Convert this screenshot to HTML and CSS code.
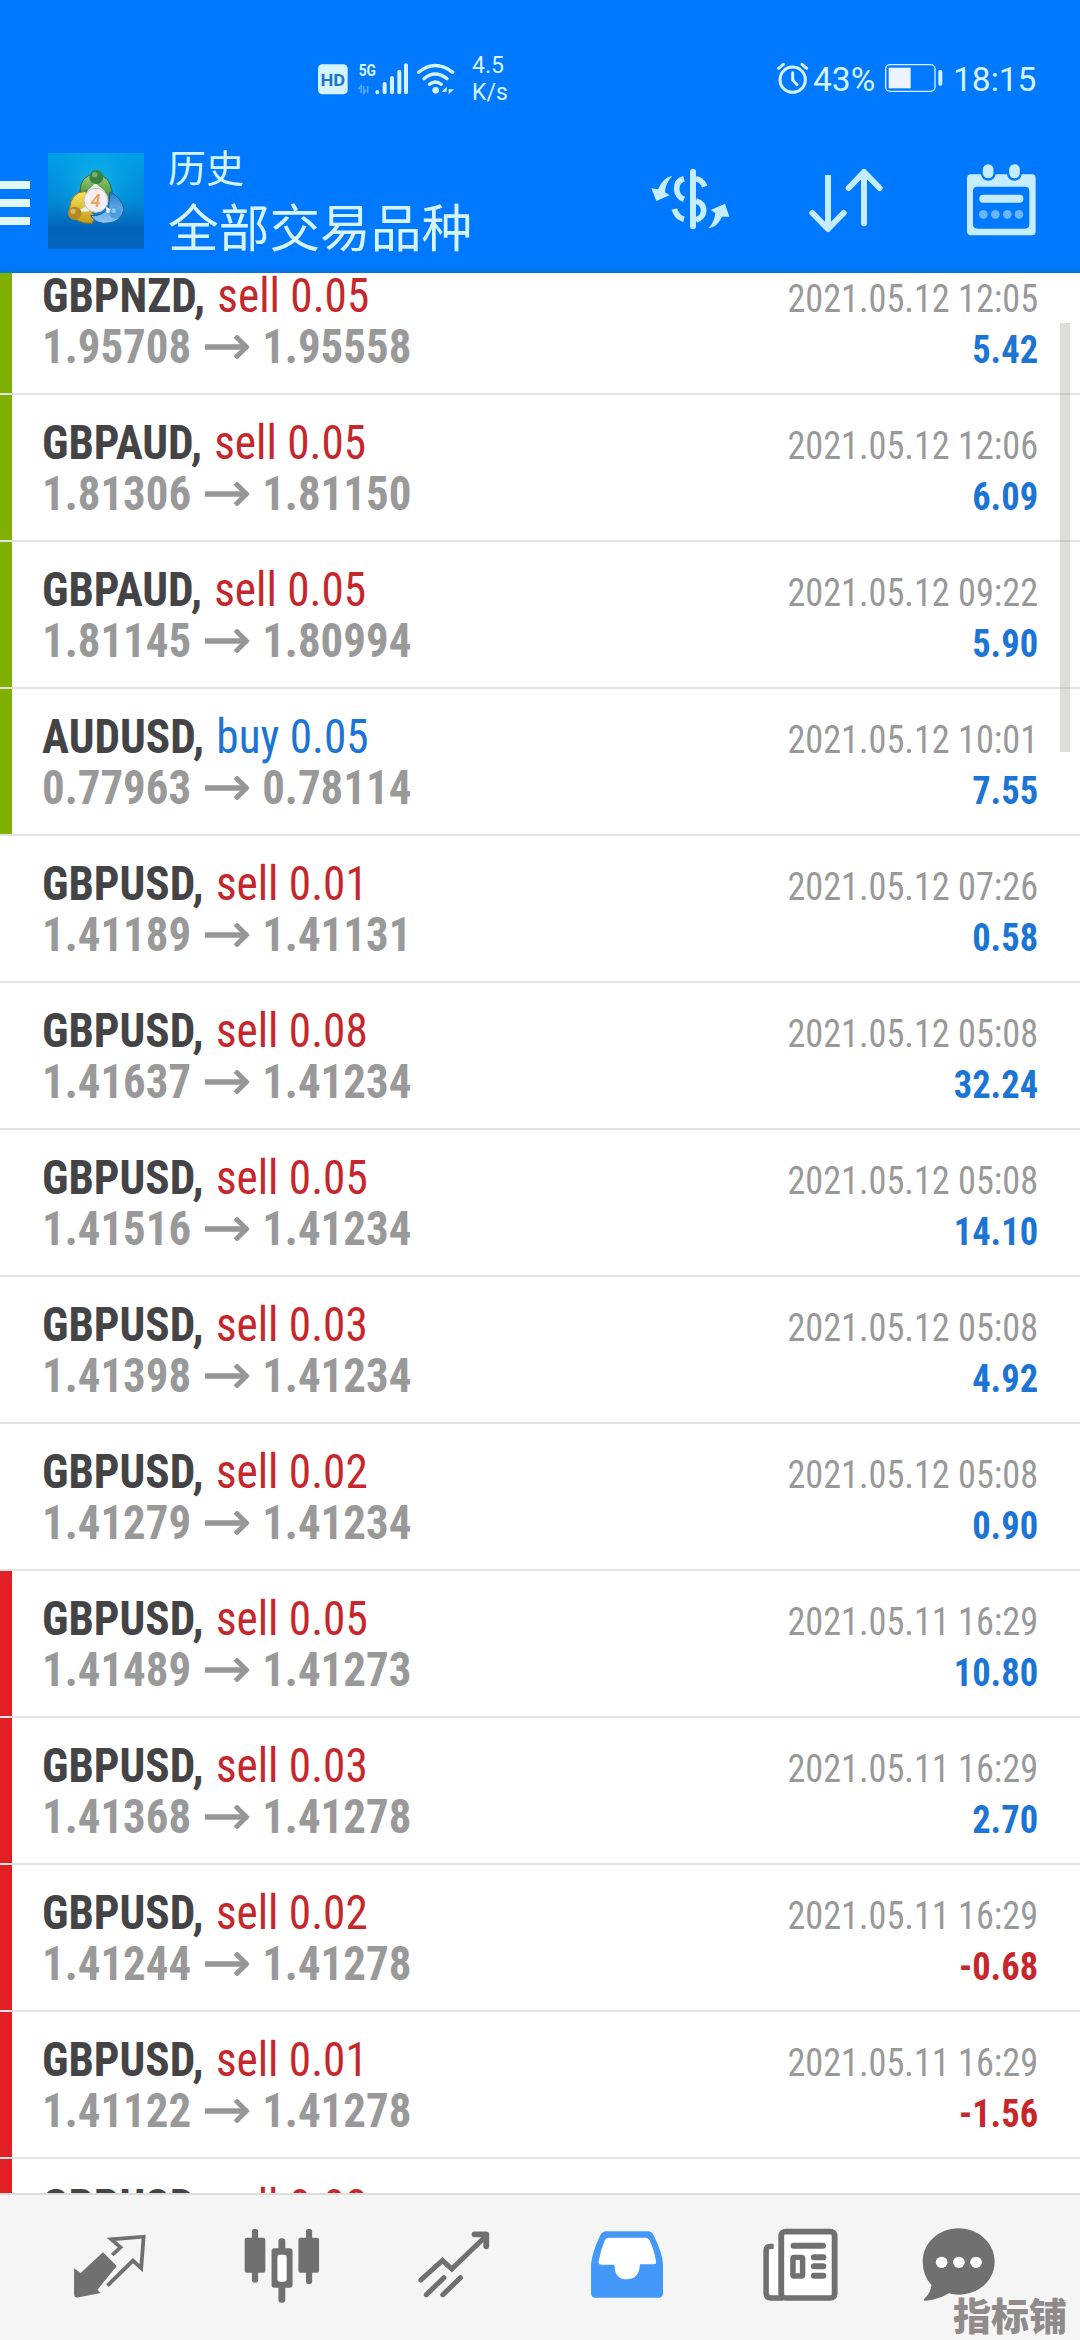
FILE: index.html
```html
<!DOCTYPE html>
<html lang="zh">
<head>
<meta charset="utf-8">
<title>历史</title>
<link rel="stylesheet" href="styles.css">
</head>
<body>
<svg class="defs" aria-hidden="true">
  <symbol id="arrow" viewBox="0 0 136 72" preserveAspectRatio="none"><path d="M0 36H128" stroke-width="16"/><path d="M92 3L125 36L92 69" stroke-width="15"/></symbol>
</svg>
<div class="app">
  <header class="top">
    <div class="status">
      <svg class="signals" viewBox="0 0 420 100">
        <rect x="0" y="7" width="89" height="90" rx="13" fill="#d6f4ff"/>
        <text x="44.500" y="71" class="hd" textLength="74" lengthAdjust="spacingAndGlyphs">HD</text>
        <text x="122" y="43" class="g5" textLength="52" lengthAdjust="spacingAndGlyphs">5G</text>
        <path d="M129 94V72L121 82M137 72V94L145 84M149 94V72" stroke="#4fa6ff" stroke-width="5" fill="none"/>
        <g stroke="#d6f4ff" stroke-width="12" stroke-linecap="round" fill="none">
          <path d="M178 90V91M200 66V91M222 48V91M244 29V91M264 10V91"/>
          <path d="M302 31Q351-10 404 31M318 50Q351 22 387 50M334 67Q352 53 370 67" stroke-width="10"/>
        </g>
        <circle cx="353" cy="85" r="10" fill="#d6f4ff"/>
        <path d="M386 97V74L371 89H386ZM392 74V97L408 82H392Z" fill="#d6f4ff"/>
      </svg>
      <div class="speed"><span>4.5</span><span>K/s</span></div>
      <svg class="alarm" viewBox="0 0 96 96">
        <g fill="none" stroke="#d6f4ff" stroke-width="9" stroke-linecap="round"><circle cx="47" cy="53" r="38"/><path d="M5 19L19 7M89 19L75 7M47 32V54L60 68"/></g>
      </svg>
      <span class="pct">43%</span>
      <svg class="battery" viewBox="0 0 174 84">
        <rect x="2" y="2" width="148" height="80" rx="13" fill="none" stroke="#d6f4ff" stroke-width="4"/>
        <rect x="11" y="11" width="66" height="62" fill="#eef4ff"/><rect x="160" y="18" width="12" height="47" rx="5" fill="#d6f4ff"/>
      </svg>
      <span class="clock">18:15</span>
    </div>
    <div class="bar">
      <div class="menu"><i></i><i></i><i></i></div>
      <svg class="logo" viewBox="144 69 288 288">
        <defs>
          <linearGradient id="sky" x1="0" y1="0" x2="0" y2="1"><stop offset="0" stop-color="#009fe8"/><stop offset=".5" stop-color="#0388d4"/><stop offset=".78" stop-color="#0264b8"/><stop offset="1" stop-color="#0566c0"/></linearGradient>
          <radialGradient id="glow" cx=".5" cy=".3" r=".5"><stop offset="0" stop-color="#20c8ee" stop-opacity=".7"/><stop offset="1" stop-color="#00a0e8" stop-opacity="0"/></radialGradient>
          <linearGradient id="green" x1="0" y1="0" x2="0" y2="1"><stop offset="0" stop-color="#a4cf7c"/><stop offset="1" stop-color="#33852e"/></linearGradient>
          <linearGradient id="gold" x1="0" y1="0" x2="0" y2="1"><stop offset="0" stop-color="#f7e45a"/><stop offset="1" stop-color="#c89a1e"/></linearGradient>
          <linearGradient id="azure" x1="0" y1="0" x2="0" y2="1"><stop offset="0" stop-color="#2b7fd0"/><stop offset="1" stop-color="#8cc9f4"/></linearGradient>
        </defs>
        <rect x="144" y="69" width="288" height="288" fill="url(#sky)"/><rect x="144" y="69" width="288" height="288" fill="url(#glow)"/>
        <path d="M240 186Q240 134 288 132Q338 136 338 212L312 212Q300 180 286 178Z" fill="url(#green)" stroke="#276b35" stroke-width="3"/>
        <path d="M258 184Q212 184 208 240Q222 282 276 280L286 262L262 226Z" fill="url(#gold)" stroke="#93751b" stroke-width="3"/>
        <path d="M330 186Q366 204 372 238Q362 282 310 280Q282 276 272 256Q304 262 326 232Z" fill="url(#azure)" stroke="#1f5ba2" stroke-width="3"/>
        <path d="M286 160L260 184H316ZM230 246L262 226L268 244ZM346 246L318 230L320 250Z" fill="#eef4e8"/>
        <circle cx="289" cy="141" r="21" fill="#398241"/><circle cx="284" cy="134" r="8" fill="#79b06e"/>
        <circle cx="224" cy="250" r="20" fill="#b28922"/><circle cx="219" cy="244" r="8" fill="#ddba58"/>
        <circle cx="346" cy="248" r="18" fill="#4b9de0"/><circle cx="341" cy="242" r="7" fill="#8ac9f5"/>
        <circle cx="288" cy="211" r="36" fill="#f3eef3" stroke="#c9bdb8" stroke-width="3"/>
        <text x="287" y="232" class="four">4</text>
      </svg>
      <div class="titles"><span class="small">历史</span><span class="big">全部交易品种</span></div>
      <svg class="icon-cur" viewBox="90 84 240 186" fill="none" stroke="#c5edff">
        <path d="M219 95V259" stroke-width="18" stroke-linecap="round"/>
        <path d="M192 116Q169 122 170 147Q171 170 192 178M228 116Q248 120 254 140M228 183Q252 190 251 213Q250 232 228 240M192 238Q170 232 163 207" stroke-width="17"/>
        <path d="M155 108Q128 114 114 148L94 145L109 183L149 166L135 157Q136 130 155 110ZM265 265Q292 262 306 230L328 230L315 191L272 210L286 219Q284 246 265 265Z" fill="#c5edff" stroke="none"/>
      </svg>
      <svg class="icon-sort" viewBox="564 84 228 196" fill="none" stroke="#c5edff" stroke-width="18" stroke-linecap="round" stroke-linejoin="round">
        <path d="M624 105V264" stroke-linecap="butt"/><path d="M577 219L624 267L671 219M732 250V98M686 144L732 96L779 144"/>
      </svg>
      <svg class="icon-cal" viewBox="1040 70 212 220">
        <path fill="#c5edff" fill-rule="evenodd" d="M1055 104H1085Q1089 123 1107 123Q1125 123 1129 104H1163Q1167 123 1185 123Q1203 123 1207 104H1238Q1249 104 1249 116V275Q1249 287 1238 287H1055Q1043 287 1043 275V116Q1043 104 1055 104ZM1074 141Q1061 141 1061 154V254Q1061 267 1074 267H1217Q1230 267 1230 254V154Q1230 141 1217 141Z"/>
        <g fill="#c5edff" stroke="#0079ff" stroke-width="5"><rect x="1088" y="71" width="37" height="47" rx="18"/><rect x="1167" y="71" width="37" height="47" rx="18"/></g>
        <rect x="1080" y="165" width="132" height="24" rx="11" fill="#c5edff"/>
        <g fill="#69b8ff"><circle cx="1092" cy="224" r="13"/><circle cx="1128" cy="224" r="13"/><circle cx="1164" cy="224" r="13"/><circle cx="1199" cy="224" r="13"/></g>
      </svg>
    </div>
  </header>
  <main class="list">
    <div class="row win"><div class="line"><b>GBPNZD,</b><span class="sell">sell 0.05</span></div><time>2021.05.12 12:05</time><div class="line price"><span>1.95708</span><svg><use href="#arrow"/></svg><span>1.95558</span></div><strong>5.42</strong></div>
    <div class="row win"><div class="line"><b>GBPAUD,</b><span class="sell">sell 0.05</span></div><time>2021.05.12 12:06</time><div class="line price"><span>1.81306</span><svg><use href="#arrow"/></svg><span>1.81150</span></div><strong>6.09</strong></div>
    <div class="row win"><div class="line"><b>GBPAUD,</b><span class="sell">sell 0.05</span></div><time>2021.05.12 09:22</time><div class="line price"><span>1.81145</span><svg><use href="#arrow"/></svg><span>1.80994</span></div><strong>5.90</strong></div>
    <div class="row win"><div class="line"><b>AUDUSD,</b><span class="buy">buy 0.05</span></div><time>2021.05.12 10:01</time><div class="line price"><span>0.77963</span><svg><use href="#arrow"/></svg><span>0.78114</span></div><strong>7.55</strong></div>
    <div class="row"><div class="line"><b>GBPUSD,</b><span class="sell">sell 0.01</span></div><time>2021.05.12 07:26</time><div class="line price"><span>1.41189</span><svg><use href="#arrow"/></svg><span>1.41131</span></div><strong>0.58</strong></div>
    <div class="row"><div class="line"><b>GBPUSD,</b><span class="sell">sell 0.08</span></div><time>2021.05.12 05:08</time><div class="line price"><span>1.41637</span><svg><use href="#arrow"/></svg><span>1.41234</span></div><strong>32.24</strong></div>
    <div class="row"><div class="line"><b>GBPUSD,</b><span class="sell">sell 0.05</span></div><time>2021.05.12 05:08</time><div class="line price"><span>1.41516</span><svg><use href="#arrow"/></svg><span>1.41234</span></div><strong>14.10</strong></div>
    <div class="row"><div class="line"><b>GBPUSD,</b><span class="sell">sell 0.03</span></div><time>2021.05.12 05:08</time><div class="line price"><span>1.41398</span><svg><use href="#arrow"/></svg><span>1.41234</span></div><strong>4.92</strong></div>
    <div class="row"><div class="line"><b>GBPUSD,</b><span class="sell">sell 0.02</span></div><time>2021.05.12 05:08</time><div class="line price"><span>1.41279</span><svg><use href="#arrow"/></svg><span>1.41234</span></div><strong>0.90</strong></div>
    <div class="row loss"><div class="line"><b>GBPUSD,</b><span class="sell">sell 0.05</span></div><time>2021.05.11 16:29</time><div class="line price"><span>1.41489</span><svg><use href="#arrow"/></svg><span>1.41273</span></div><strong>10.80</strong></div>
    <div class="row loss"><div class="line"><b>GBPUSD,</b><span class="sell">sell 0.03</span></div><time>2021.05.11 16:29</time><div class="line price"><span>1.41368</span><svg><use href="#arrow"/></svg><span>1.41278</span></div><strong>2.70</strong></div>
    <div class="row loss"><div class="line"><b>GBPUSD,</b><span class="sell">sell 0.02</span></div><time>2021.05.11 16:29</time><div class="line price"><span>1.41244</span><svg><use href="#arrow"/></svg><span>1.41278</span></div><strong class="neg">-0.68</strong></div>
    <div class="row loss"><div class="line"><b>GBPUSD,</b><span class="sell">sell 0.01</span></div><time>2021.05.11 16:29</time><div class="line price"><span>1.41122</span><svg><use href="#arrow"/></svg><span>1.41278</span></div><strong class="neg">-1.56</strong></div>
    <div class="row loss"><div class="line"><b>GBPUSD,</b><span class="sell">sell 0.03</span></div></div>
    <div class="scroll"></div>
  </main>
  <nav class="tabs">
    <svg preserveAspectRatio="none" viewBox="210 262 220 230"><path fill="#707070" d="M300 338L340 379L284 450L293 460L230 473Q216 476 216 462V386L235 400Z"/><path fill="none" stroke="#707070" stroke-width="11" d="M327 346L351 323L324 299L418 291L411 386L387 363L313 438"/></svg>
    <svg preserveAspectRatio="none" viewBox="707 262 220 230" fill="#707070"><rect x="709" y="294" width="60" height="105" rx="6"/><rect x="865" y="294" width="60" height="105" rx="6"/><rect x="730" y="267" width="18" height="162" rx="9"/><rect x="887" y="267" width="18" height="167" rx="9"/><rect x="807" y="296" width="20" height="40" rx="9"/><rect x="807" y="436" width="20" height="53" rx="9"/><rect x="787" y="326" width="61" height="118" rx="8"/><rect x="804" y="345" width="27" height="81" rx="7" fill="#fff"/></svg>
    <svg preserveAspectRatio="none" viewBox="1207 262 220 230" fill="none" stroke="#707070" stroke-width="15" stroke-linecap="round"><path d="M1221 421L1284 362L1311 388L1408 291M1237 465L1288 414M1285 465L1336 414"/><path d="M1377 284H1411V320" stroke-width="17" stroke-linejoin="round"/></svg>
    <svg preserveAspectRatio="none" viewBox="141 262 220 230"><path fill="#fff" d="M190 290H315L337 376H287V420H216V376H165Z"/><path fill="#4398fa" fill-rule="evenodd" d="M191 275H312Q323 275 328 286Q355 340 356 374V460Q356 474 343 474H160Q147 474 147 460V374Q149 340 174 286Q180 275 191 275ZM198 294Q190 294 187 302Q175 330 169 365Q168 374 177 375H215Q215 419 251 419Q287 419 289 374H329Q337 373 336 366Q330 330 317 302Q314 294 306 294Z"/></svg>
    <svg preserveAspectRatio="none" viewBox="646 262 220 230"><rect x="654" y="320" width="45" height="155" fill="#fff"/><rect x="699" y="276" width="155" height="199" rx="12" fill="#fff" stroke="#707070" stroke-width="17"/><path fill="none" stroke="#707070" stroke-width="16" d="M677 320H666Q655 320 655 334V460Q655 475 669 475H704"/><g stroke="#707070" stroke-width="18" stroke-linecap="round"><path d="M735 318H820M794 353H821M794 380H821M794 408H821"/></g><rect x="733" y="353" width="28" height="56" rx="3" fill="#fff" stroke="#707070" stroke-width="16"/></svg>
    <svg preserveAspectRatio="none" viewBox="1104 262 220 230"><path fill="#707070" d="M1213 266C1270 266 1318 310 1318 366C1318 422 1271 465 1213 465Q1198 465 1185 461Q1155 480 1119 483Q1108 484 1115 476Q1134 457 1134 435Q1109 408 1109 366C1109 310 1156 266 1213 266Z"/><g fill="#fff"><circle cx="1164" cy="368" r="17"/><circle cx="1214" cy="368" r="17"/><circle cx="1264" cy="368" r="17"/></g></svg>
    <span class="mark">指标铺</span>
  </nav>
</div>
</body>
</html>
```
FILE: styles.css
```css
* { box-sizing: border-box; }
body { margin: 0; background: #fff; font-family: Roboto, "Noto Sans CJK SC", sans-serif; }
.defs { display: none; }
.app { width: 1080px; height: 2340px; display: flex; flex-direction: column; overflow: hidden; }

.top { height: 273px; flex: none; background: linear-gradient(#0079ff 266px, #0874d8 273px); color: #d6f4ff; }
.status { height: 130px; padding: 55px 0 0 318px; display: flex; align-items: flex-start; }
.signals { width: 140px; height: 33.330px; margin-top: 7px; overflow: visible; }
.hd { font: 700 48px Roboto, sans-serif; fill: #1974d2; text-anchor: middle; }
.g5 { font: 700 52px Roboto, sans-serif; fill: #d6f4ff; }
.speed { width: 50px; margin: -3px 0 0 14px; display: flex; flex-direction: column; font-size: 23px; line-height: 27px; }
.alarm { width: 32px; height: 32px; margin: 7px 0 0 255px; flex: none; }
.pct, .clock { font-size: 33.500px; line-height: 40px; margin-top: 5px; white-space: nowrap; }
.pct { width: 65px; margin-left: 4px; }
.battery { width: 58px; height: 28px; margin: 9px 0 0 7px; flex: none; }
.clock { margin-left: 10px; }

.bar { height: 143px; display: flex; align-items: flex-start; }
.menu { width: 30px; margin: 51px 18px 0 0; display: flex; flex-direction: column; gap: 10px; }
.menu i { height: 8px; background: #e2f8ff; }
.logo { width: 96px; height: 96px; margin-top: 23px; }
.four { font: italic 500 54px Roboto, sans-serif; fill: #e9a35c; text-anchor: middle; }
.titles { width: 482px; margin: 12px 0 0 24px; display: flex; flex-direction: column; white-space: nowrap; }
.small { font-size: 38px; line-height: 54px; }
.big { font-size: 50.700px; line-height: 68px; }
.icon-cur { width: 80px; height: 62px; margin-top: 38px; }
.icon-sort { width: 76px; height: 65.330px; margin: 38px 0 0 78px; }
.icon-cal { width: 70.670px; height: 73.330px; margin: 33px 0 0 82px; }

.list { flex: 1; min-height: 0; overflow: hidden; position: relative; font-family: "Roboto Condensed", Roboto, sans-serif; font-stretch: 75%; }
.row { height: 147px; padding: 22px 42px 0 42px; border-bottom: 2px solid #e3e3e3; background: #fff; display: grid; grid-template-columns: auto auto; grid-template-rows: 51px 51px; justify-content: space-between; align-items: baseline; line-height: 51px; white-space: nowrap; }
.row:first-child { margin-top: -25px; }
.win { background: linear-gradient(90deg, #80b000 12px, #fff 12px) padding-box; }
.loss { background: linear-gradient(90deg, #e02024 12px, #fff 12px) padding-box; }
.line { display: flex; align-items: baseline; font-size: 48px; transform: scaleX(.942); transform-origin: 0 50%; }
.line b { font-weight: 700; color: #444346; margin-right: 13px; }
.sell { color: #c5272c; }
.buy { color: #1c74d4; }
.row time, .row strong { font-size: 39.500px; transform: scaleX(.924); transform-origin: 100% 50%; text-align: right; color: #999; }
.row time { transform: scaleX(.918); }
.price { font-weight: 700; color: #999; transform: scaleX(.935); }
.price svg { width: 48.500px; height: 24px; margin: 0 13.500px 0 14px; align-self: center; fill: none; stroke: #969696; }
.row strong { color: #1c74d4; }
.row .neg { color: #c5272c; }
.scroll { position: absolute; left: 1060px; top: 50px; width: 10px; height: 429px; background: rgba(120, 122, 112, .25); }

.tabs { height: 147px; flex: none; position: relative; border-top: 2px solid #dcdcdc; background: #f5f5f5; padding: 32px 0 0 24px; display: grid; grid-template-columns: 172px 172px 172px 174px 174px 142px; justify-items: center; align-items: start; }
.tabs svg { width: 75.760px; height: 76.670px; }
.mark { position: absolute; right: 13px; bottom: -1px; font: 900 38px/54px "Noto Sans CJK SC", sans-serif; color: #8f8b8b; }
```
